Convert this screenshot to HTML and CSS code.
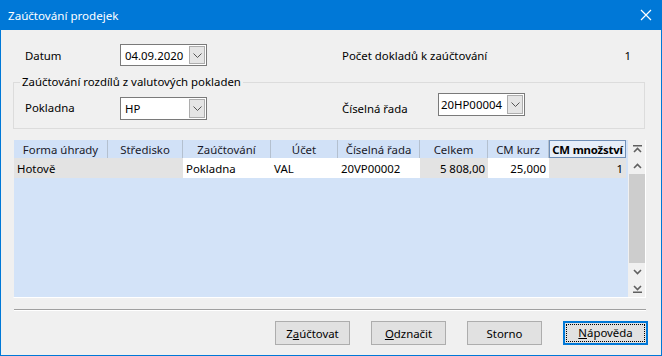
FILE: index.html
```html
<!DOCTYPE html>
<html lang="cs">
<head>
<meta charset="UTF-8">
<title>Zaúčtování prodejek</title>
<link rel="stylesheet" href="styles.css">
</head>
<body>

<div class="window">
    <div class="titlebar">
        <span class="title">Zaúčtování prodejek</span>
        <svg class="close" width="12" height="12" viewBox="0 0 12 12"><path d="M1 1 L11 11 M11 1 L1 11" stroke="#fff" stroke-width="1.2" fill="none"/></svg>
    </div>

    <div class="content">
        <div class="row-top">
            <span class="lbl">Datum</span>
            <div class="combo">
                <span class="combo-val">04.09.2020</span>
                <span class="drop"><svg width="9" height="5" viewBox="0 0 9 5"><path d="M0.5 0.5 L4.5 4.5 L8.5 0.5" stroke="#555" fill="none"/></svg></span>
            </div>
            <span class="lbl-count">Počet dokladů k zaúčtování</span>
            <span class="count">1</span>
        </div>

        <fieldset class="group">
            <legend>Zaúčtování rozdílů z valutových pokladen</legend>
            <div class="group-row">
                <span class="lbl lbl-g">Pokladna</span>
                <div class="combo combo-hp">
                    <span class="combo-val">HP</span>
                    <span class="drop"><svg width="9" height="5" viewBox="0 0 9 5"><path d="M0.5 0.5 L4.5 4.5 L8.5 0.5" stroke="#555" fill="none"/></svg></span>
                </div>
                <span class="lbl-rada">Číselná řada</span>
                <div class="combo combo-rada">
                    <span class="combo-val">20HP00004</span>
                    <span class="drop"><svg width="9" height="5" viewBox="0 0 9 5"><path d="M0.5 0.5 L4.5 4.5 L8.5 0.5" stroke="#555" fill="none"/></svg></span>
                </div>
            </div>
        </fieldset>

        <div class="grid">
            <div class="table-wrap">
                <table class="data">
                    <colgroup>
                        <col style="width:94px">
                        <col style="width:75px">
                        <col style="width:88px">
                        <col style="width:67px">
                        <col style="width:82px">
                        <col style="width:68px">
                        <col style="width:61px">
                        <col style="width:77px">
                    </colgroup>
                    <thead>
                        <tr>
                            <th>Forma úhrady</th>
                            <th>Středisko</th>
                            <th>Zaúčtování</th>
                            <th>Účet</th>
                            <th>Číselná řada</th>
                            <th>Celkem</th>
                            <th>CM kurz</th>
                            <th class="th-active">CM množství</th>
                        </tr>
                    </thead>
                    <tbody>
                        <tr>
                            <td class="gray">Hotově</td>
                            <td class="gray"></td>
                            <td>Pokladna</td>
                            <td>VAL</td>
                            <td>20VP00002</td>
                            <td class="gray num">5 808,00</td>
                            <td class="num">25,000</td>
                            <td class="gray num">1</td>
                        </tr>
                    </tbody>
                </table>
            </div>
            <div class="scrollbar">
                <div class="sb-btn"><svg width="9" height="8" viewBox="0 0 9 8"><path d="M0 0.75 H9" stroke="#606060" stroke-width="1.5"/><path d="M1 7 L4.5 3.5 L8 7" stroke="#606060" stroke-width="1.6" fill="none"/></svg></div>
                <div class="sb-btn"><svg width="9" height="6" viewBox="0 0 9 6"><path d="M1 5 L4.5 1.5 L8 5" stroke="#606060" stroke-width="1.6" fill="none"/></svg></div>
                <div class="sb-thumb"></div>
                <div class="sb-btn"><svg width="9" height="6" viewBox="0 0 9 6"><path d="M1 1 L4.5 4.5 L8 1" stroke="#606060" stroke-width="1.6" fill="none"/></svg></div>
                <div class="sb-btn"><svg width="9" height="8" viewBox="0 0 9 8"><path d="M1 1 L4.5 4.5 L8 1" stroke="#606060" stroke-width="1.6" fill="none"/><path d="M0 7.25 H9" stroke="#606060" stroke-width="1.5"/></svg></div>
            </div>
        </div>

        <div class="sep"></div>

        <div class="buttons">
            <button class="btn">Z<u>a</u>účtovat</button>
            <button class="btn"><u>O</u>dznačit</button>
            <button class="btn">Storno</button>
            <button class="btn btn-default"><span class="focus"><u>N</u>ápověda</span></button>
        </div>
    </div>
</div>

</body>
</html>
```

FILE: styles.css
```css
* {
    box-sizing: border-box;
}
body {
    margin: 0;
    background: #f0f0f0;
    font-family: "Noto Sans", "Open Sans", sans-serif;
    font-size: 11.4px;
    color: #000;
}
.window {
    width: 662px;
    height: 356px;
    border: 1px solid #0078d7;
    border-top: none;
    background: #f0f0f0;
    display: flex;
    flex-direction: column;
}
.titlebar {
    height: 30px;
    margin: 0 -1px;
    background: #0078d7;
    color: #fff;
    display: flex;
    align-items: center;
    justify-content: space-between;
    padding: 0 10px 0 8px;
}
.title {
    font-size: 11.6px;
}
.content {
    padding: 0 16px 0 12px;
}
.row-top {
    display: flex;
    align-items: center;
    height: 22px;
    margin-top: 14px;
}
.lbl {
    width: 107px;
    padding-left: 12px;
}
.combo {
    width: 87px;
    height: 22px;
    background: #fff;
    border: 1px solid #7a7a7a;
    display: flex;
    align-items: center;
    justify-content: space-between;
    padding: 0 1px 0 4px;
}
.drop {
    width: 16px;
    height: 18px;
    background: #e5e5e5;
    border: 1px solid #adadad;
    display: flex;
    align-items: center;
    justify-content: center;
}
.lbl-count {
    margin-left: 135px;
    flex: 1;
}
.count {
    padding-right: 14px;
}
.group {
    margin: 8px 0 0 0;
    padding: 0 0 8px 0;
    border: 1px solid #dcdcdc;
    min-inline-size: 0;
}
.group legend {
    margin-left: 6px;
    padding: 0 2px;
    line-height: 16px;
}
.group-row {
    display: flex;
    align-items: flex-start;
}
.lbl-g {
    width: 106px;
    padding-left: 11px;
    margin-top: 10px;
}
.combo-hp {
    margin-top: 7px;
    height: 23px;
}
.combo-hp .drop {
    height: 19px;
}
.lbl-rada {
    width: 96px;
    margin-left: 135px;
    margin-top: 11px;
}
.combo-rada {
    margin-top: 3px;
    height: 23px;
    padding-left: 2px;
}
.combo-rada .drop {
    height: 19px;
}
.grid {
    margin-top: 11px;
    width: 633px;
    height: 158px;
    display: flex;
    border-right: 1px solid #fff;
    border-bottom: 1px solid #fff;
    border-left: 1px solid #f0f0f0;
}
.table-wrap {
    width: 615px;
    background: #d3e3f8;
    overflow: hidden;
}
.data {
    table-layout: fixed;
    width: 612px;
    border-collapse: separate;
    border-spacing: 0;
    font-size: 11.4px;
}
.data th {
    height: 18px;
    padding: 0;
    background: #d1e1f7;
    border-right: 1px solid #b4c0cf;
    text-align: center;
    font-weight: normal;
    color: #1a1a2a;
    white-space: nowrap;
    overflow: hidden;
}
.data th.th-active {
    font-weight: bold;
    background: #e6eef9;
    border: 1px solid #6f8fb8;
    color: #000;
    letter-spacing: -0.2px;
}
.data td {
    height: 20px;
    background: #fff;
    padding: 0 3px;
    white-space: nowrap;
    overflow: hidden;
}
.data td.gray {
    background: #e3e3e3;
}
.data td.num {
    text-align: right;
}
.scrollbar {
    width: 17px;
    padding-left: 1px;
    background: #f0f0f0;
    display: flex;
    flex-direction: column;
}
.sb-btn {
    height: 17px;
    display: flex;
    align-items: center;
    justify-content: center;
}
.sb-thumb {
    flex: 1;
    background: #cdcdcd;
}
.sep {
    margin-top: 11px;
    margin-left: 1px;
    width: 632px;
    height: 1px;
    background: #a0a0a0;
    box-shadow: 0 1px 0 #fff;
}
.buttons {
    display: flex;
    justify-content: flex-end;
    gap: 21px;
    margin-top: 11px;
    margin-right: -3px;
}
.btn {
    width: 75px;
    height: 24px;
    background: #e1e1e1;
    border: 1px solid #adadad;
    font-family: inherit;
    font-size: 11.4px;
    color: #000;
    padding: 0;
}
.btn-default {
    width: 85px;
    border: 2px solid #0078d7;
    padding: 1px;
}
.focus {
    display: block;
    height: 100%;
    border: 1px dotted #000;
    line-height: 16px;
}
```
